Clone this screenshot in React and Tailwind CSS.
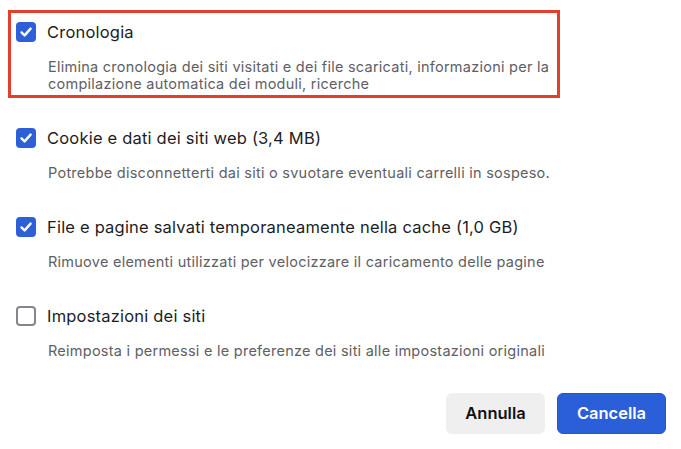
import React from 'react';

const items = [
  {
    title: 'Cookie e dati dei siti web (3,4 MB)',
    desc: 'Potrebbe disconnetterti dai siti o svuotare eventuali carrelli in sospeso.',
    checked: true,
  },
  {
    title: 'File e pagine salvati temporaneamente nella cache (1,0 GB)',
    desc: 'Rimuove elementi utilizzati per velocizzare il caricamento delle pagine',
    checked: true,
  },
  {
    title: 'Impostazioni dei siti',
    desc: 'Reimposta i permessi e le preferenze dei siti alle impostazioni originali',
    checked: false,
  },
];

function Checkbox({ checked }) {
  if (!checked) {
    return <span className="w-[20px] h-[20px] shrink-0 rounded-[4px] border-2 border-[#85858c] bg-white" />;
  }
  return (
    <span className="w-[20px] h-[20px] shrink-0 rounded-[4px] bg-[#2c5fd8] flex items-center justify-center">
      <svg width="14" height="14" viewBox="0 0 14 14" fill="none">
        <path d="M2.5 7.4 L5.6 10.4 L11.6 3.6" stroke="white" strokeWidth="2.4" strokeLinecap="round" strokeLinejoin="round" />
      </svg>
    </span>
  );
}

function Item({ title, desc, checked }) {
  return (
    <div>
      <div className="flex items-center gap-[11px] h-[22px]">
        <Checkbox checked={checked} />
        <span className="text-[16.5px] tracking-[0.2px] leading-[22px] text-[#1d1d1f] whitespace-nowrap">{title}</span>
      </div>
      <p className="mt-[15px] pl-[32px] text-[14.5px] tracking-[0.25px] leading-[17px] text-[#5f6064] whitespace-nowrap">{desc}</p>
    </div>
  );
}

export default function App() {
  return (
    <div className="w-[681px] h-[449px] bg-white overflow-hidden pt-[10px] pl-[8px]" style={{ fontFamily: 'Inter, "Liberation Sans", sans-serif' }}>
      <div className="w-[552px] h-[88px] border-[3px] border-[#e3402b] pt-[8px] pl-[5px]">
        <Item
          title="Cronologia"
          checked={true}
          desc={
            <>
              Elimina cronologia dei siti visitati e dei file scaricati, informazioni per la
              <br />
              compilazione automatica dei moduli, ricerche
            </>
          }
        />
      </div>
      <div className="pl-[8px] mt-[29px] flex flex-col gap-[35px]">
        {items.map((it) => (
          <Item key={it.title} {...it} />
        ))}
      </div>
      <div className="flex justify-end gap-[12px] pr-[15px] mt-[34px]">
        <button className="w-[99px] h-[41px] rounded-[6px] bg-[#efefef] text-[16.5px] font-semibold text-[#111]">Annulla</button>
        <button className="w-[109px] h-[41px] rounded-[6px] bg-[#2b5ed9] border border-[#2355cc] text-[16.5px] font-semibold text-white">Cancella</button>
      </div>
    </div>
  );
}
